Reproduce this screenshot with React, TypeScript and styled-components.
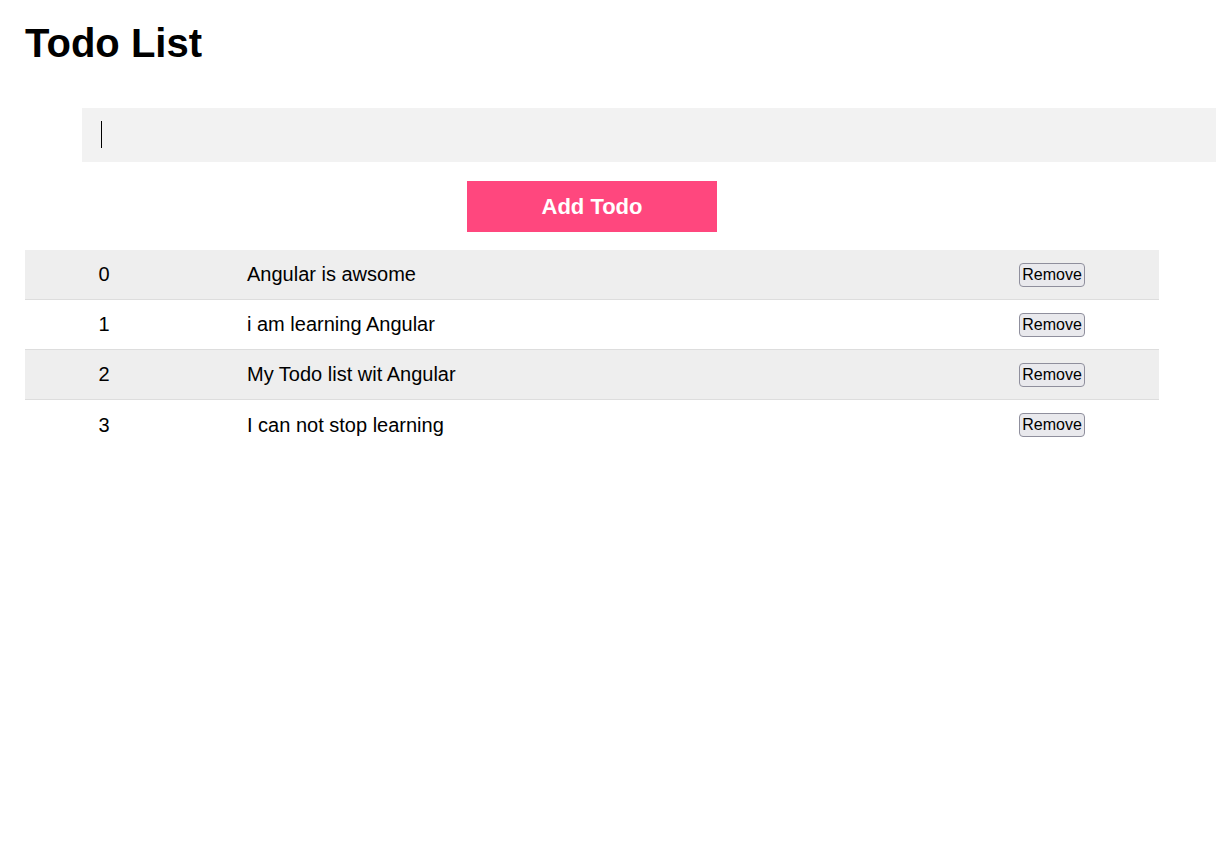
import { useState } from "react";
import styled, { createGlobalStyle } from "styled-components";

const GlobalStyle = createGlobalStyle`
  body {
    margin: 0;
    background: #ffffff;
    font-family: "Liberation Sans", Arial, sans-serif;
    color: #000000;
  }
`;

const Page = styled.div`
  padding: 20px 25px;
  width: 1134px;
`;

const Title = styled.h1`
  margin: 0 0 42px;
  font-size: 40px;
  line-height: 46px;
  font-weight: 700;
`;

const InputWrap = styled.div`
  position: relative;
  width: 1134px;
  margin: 0 0 19px 57px;
`;

const TodoInput = styled.input`
  display: block;
  box-sizing: border-box;
  width: 100%;
  height: 54px;
  padding: 0 19px;
  border: none;
  outline: none;
  background: #f2f2f2;
  font-family: "Liberation Sans", Arial, sans-serif;
  font-size: 24px;
  caret-color: transparent;
`;

// drawn caret, so the focused look shows even when the window has no focus
const Caret = styled.span`
  position: absolute;
  left: 19px;
  top: 13px;
  width: 1px;
  height: 27px;
  background: #000000;
  pointer-events: none;
`;

const AddButton = styled.button`
  display: block;
  width: 250px;
  height: 51px;
  margin: 0 auto 18px;
  border: none;
  background: #ff477e;
  color: #ffffff;
  font-family: "Liberation Sans", Arial, sans-serif;
  font-size: 22px;
  font-weight: 700;
  cursor: pointer;
`;

const List = styled.div`
  display: flex;
  flex-direction: column;
`;

const Row = styled.div<{ $striped: boolean }>`
  display: grid;
  grid-template-columns: 158px 1fr 214px;
  align-items: center;
  height: 50px;
  box-sizing: border-box;
  background: ${(props) => (props.$striped ? "#eeeeee" : "#ffffff")};
  border-bottom: 1px solid #dddddd;
  font-size: 20px;

  &:last-child {
    border-bottom: none;
  }
`;

const Index = styled.div`
  text-align: center;
`;

const Text = styled.div`
  padding-left: 64px;
`;

const Action = styled.div`
  display: flex;
  justify-content: center;
`;

const RemoveButton = styled.button`
  height: 24px;
  padding: 0 2px;
  border: 1px solid #8f8f9d;
  border-radius: 4px;
  background: #e9e9ed;
  color: #000000;
  font-family: "Liberation Sans", Arial, sans-serif;
  font-size: 16px;
  line-height: 20px;
  cursor: pointer;
`;

const initialTodos = [
  "Angular is awsome",
  "i am learning Angular",
  "My Todo list wit Angular",
  "I can not stop learning",
];

export default function App() {
  const [todos, setTodos] = useState<string[]>(initialTodos);
  const [value, setValue] = useState("");

  const addTodo = () => {
    if (!value.trim()) return;
    setTodos([...todos, value.trim()]);
    setValue("");
  };

  return (
    <>
      <GlobalStyle />
      <Page>
        <Title>Todo List</Title>
        <InputWrap>
          <TodoInput
            autoFocus
            value={value}
            onChange={(e) => setValue(e.target.value)}
            style={{ caretColor: value ? "#000000" : "transparent" }}
          />
          {!value && <Caret />}
        </InputWrap>
        <AddButton onClick={addTodo}>Add Todo</AddButton>
        <List>
          {todos.map((todo, i) => (
            <Row key={i} $striped={i % 2 === 0}>
              <Index>{i}</Index>
              <Text>{todo}</Text>
              <Action>
                <RemoveButton onClick={() => setTodos(todos.filter((_, j) => j !== i))}>Remove</RemoveButton>
              </Action>
            </Row>
          ))}
        </List>
      </Page>
    </>
  );
}
